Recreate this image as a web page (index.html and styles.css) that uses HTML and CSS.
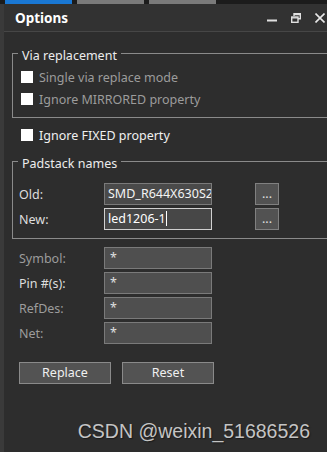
FILE: index.html
```html
<!DOCTYPE html>
<html lang="en">

<head>
    <meta charset="UTF-8">
    <title>Options</title>
    <link rel="stylesheet" href="styles.css">
</head>

<body>
    <div class="tabs">
        <span class="tab active"></span>
        <span class="tab"></span>
        <span class="tab"></span>
    </div>
    <div class="window">
        <div class="titlebar">
            <span class="title">Options</span>
            <div class="controls">
                <svg width="10" height="10" viewBox="0 0 10 10"><path d="M0 7.5h10" stroke="#e0e0e0" stroke-width="2"/></svg>
                <svg width="10" height="10" viewBox="0 0 10 10" fill="none" stroke="#e0e0e0" stroke-width="1.4"><path d="M3 3V0.7h6.3v5H7"/><rect x="0.7" y="4" width="6.3" height="5.3"/><path d="M3 1.6h6.3M0.7 4.9h6.3"/></svg>
                <svg width="10" height="10" viewBox="0 0 10 10"><path d="M0.5 0.5l9 9M9.5 0.5l-9 9" stroke="#e8e8e8" stroke-width="1.6"/></svg>
            </div>
        </div>
        <div class="content">
            <div class="group via">
                <div class="legend"><span>Via replacement</span></div>
                <div class="group-body">
                    <label class="check dim"><span class="box"></span>Single via replace mode</label>
                    <label class="check dim"><span class="box"></span>Ignore MIRRORED property</label>
                </div>
            </div>
            <label class="check lone"><span class="box"></span>Ignore FIXED property</label>
            <div class="group pad">
                <div class="legend"><span>Padstack names</span></div>
                <div class="group-body">
                    <div class="field">
                        <span class="name">Old:</span>
                        <span class="input old">SMD_R644X630S2</span>
                        <span class="browse">...</span>
                    </div>
                    <div class="field">
                        <span class="name">New:</span>
                        <span class="input focus">led1206-1<span class="caret"></span></span>
                        <span class="browse">...</span>
                    </div>
                </div>
            </div>
            <div class="filters">
                <div class="field"><span class="name dim">Symbol:</span><span class="input">*</span></div>
                <div class="field"><span class="name">Pin #(s):</span><span class="input">*</span></div>
                <div class="field"><span class="name dim">RefDes:</span><span class="input">*</span></div>
                <div class="field"><span class="name dim">Net:</span><span class="input">*</span></div>
            </div>
            <div class="actions">
                <span class="btn">Replace</span>
                <span class="btn">Reset</span>
            </div>
        </div>
        <div class="mark">CSDN @weixin_51686526</div>
    </div>
</body>

</html>
```

FILE: styles.css
```css
html,
body {
    width: 100%;
    height: 100%;
    margin: 0;
    padding: 0;
    overflow: hidden;
    background: #2d2d2d;
}

body {
    font-family: "Noto Sans", "Open Sans", sans-serif;
    font-size: 12.5px;
    color: #e6e6e6;
}

.tabs {
    height: 4px;
    background: #1c1c1c;
    display: flex;
    gap: 5px;
    padding-left: 5px;
}

.tabs .tab {
    width: 67px;
    background: #7a7a7a;
}

.tabs .tab.active {
    background: #1a78d4;
}

.window {
    position: relative;
    height: 448px;
    border-left: 4px solid #3a3a3a;
}

.titlebar {
    height: 27px;
    background: #323232;
    border-bottom: 1px solid #464646;
    display: flex;
    align-items: center;
    justify-content: space-between;
    padding-left: 11px;
}

.titlebar .title {
    font-weight: bold;
    font-size: 13.5px;
    color: #fff;
    padding-top: 1px;
}

.titlebar .controls {
    display: flex;
    gap: 14px;
    padding-right: 2px;
}

.content {
    padding: 17px 0 0 8px;
}

/* group box: header row draws the top border around the caption */
.group .legend {
    display: flex;
    height: 14px;
    line-height: 14px;
    color: #ececec;
}

.group .legend::before,
.group .legend::after {
    content: "";
    box-sizing: border-box;
    margin-top: 4px;
    height: 10px;
    border-top: 1px solid #8a8a8a;
}

.group .legend::before {
    width: 6px;
    border-left: 1px solid #8a8a8a;
}

.group .legend::after {
    flex: 1;
}

.group .legend span {
    padding: 0 4px;
}

.group-body {
    border-left: 1px solid #8a8a8a;
    border-bottom: 1px solid #8a8a8a;
}

.via .group-body {
    padding: 3px 0 7px 8px;
}

.check {
    height: 22px;
    display: flex;
    align-items: center;
    gap: 6px;
    color: #f0f0f0;
}

.check .box {
    width: 12px;
    height: 12px;
    background: #fff;
}

.check.dim {
    color: #9c9c9c;
}

.lone {
    margin: 6px 0 11px 9px;
}

.pad .group-body {
    padding: 12px 0 8px 6px;
}

.field {
    display: flex;
    align-items: center;
    height: 22px;
}

.field + .field {
    margin-top: 3px;
}

.field .name {
    width: 85px;
    color: #dedede;
}

.field .name.dim {
    color: #9c9c9c;
}

.input {
    box-sizing: border-box;
    width: 108px;
    height: 22px;
    background: #4f4f4f;
    border: 1px solid #7a7a7a;
    padding: 0 5px;
    line-height: 20px;
    color: #e0e0e0;
    white-space: nowrap;
    overflow: hidden;
}

.input.old {
    background: #4a4a4a;
    color: #f4f4f4;
    padding: 0 3px;
}

.input.focus {
    background: #474747;
    border-color: #d0d0d0;
    color: #fff;
    padding: 0 3px;
}

.caret {
    display: inline-block;
    width: 1px;
    height: 15px;
    background: #fff;
    vertical-align: -3px;
}

.browse {
    box-sizing: border-box;
    width: 24px;
    height: 22px;
    margin-left: 43px;
    background: #525252;
    border: 1px solid #808080;
    text-align: center;
    line-height: 20px;
    color: #e0e0e0;
}

.filters {
    padding: 8px 0 0 7px;
}

.actions {
    display: flex;
    gap: 11px;
    padding: 18px 0 0 7px;
}

.btn {
    box-sizing: border-box;
    width: 92px;
    height: 22px;
    background: #535353;
    border: 1px solid #8a8a8a;
    text-align: center;
    line-height: 20px;
    color: #f0f0f0;
}

.mark {
    position: absolute;
    right: 17px;
    top: 416px;
    font-family: "Liberation Sans", Arial, sans-serif;
    font-size: 19.5px;
    color: #c4c4c4;
    text-shadow: 1px 1px 1px #1a1a1a;
}
```
